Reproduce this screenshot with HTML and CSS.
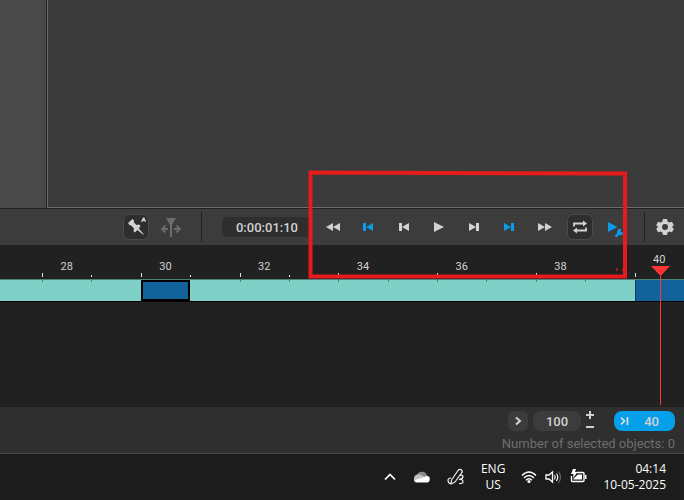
FILE: index.html
```html
<!DOCTYPE html>
<html lang="en">
<head>
<meta charset="utf-8">
<title>Timeline</title>
<link rel="stylesheet" href="styles.css">
</head>
<body>
<main class="workspace">
  <aside class="side-panel"></aside>
  <section class="viewer"></section>
</main>

<div class="toolbar">
  <button class="tool boxed pin" aria-label="Auto pin"><svg width="26" height="26" viewBox="0 0 26 26"><path d="M5 9 9.500 5 11 6.500 11 8.500 13.500 11 16 10.500 17.500 12 15.800 14.500 21 20.500 20 20.500 14.300 16 12 18.500 10.500 17 11 14.500 8.500 11.800 6.500 11Z" fill="#d2d2d2"/><path d="M18 8 20 3.500H21.500L23 8H21.700V7H19.500V8Z" fill="#d2d2d2"/></svg></button>
  <button class="tool split" aria-label="Split" disabled><svg width="26" height="26" viewBox="0 0 26 26"><path d="M8 4H18L14 11V23H12V11Z" fill="#6c6c6c"/><path d="M10 15H4.500M7.500 11.500 4 15 7.500 18.500M16 15H21.500M18.500 11.500 22 15 18.500 18.500" fill="none" stroke="#6c6c6c" stroke-width="1.800"/></svg></button>
  <span class="divider"></span>
  <input class="timecode" aria-label="Timecode" value="0:00:01:10">
  <div class="transport">
    <button class="tool" aria-label="Rewind"><svg width="26" height="26" viewBox="0 0 26 26"><path d="M6 13 13 9V17ZM13 13 20 9V17Z" fill="#d2d2d2"/></svg></button>
    <button class="tool" aria-label="First key"><svg width="26" height="26" viewBox="0 0 26 26"><path d="M8 9H11V17H8ZM11 13 18 9V17Z" fill="#0b9be8"/></svg></button>
    <button class="tool" aria-label="Previous frame"><svg width="26" height="26" viewBox="0 0 26 26"><path d="M8 9H11V17H8ZM11 13 18 9V17Z" fill="#d2d2d2"/></svg></button>
    <button class="tool" aria-label="Play"><svg width="26" height="26" viewBox="0 0 26 26"><path d="M8 8V18L18 13Z" fill="#d2d2d2"/></svg></button>
    <button class="tool" aria-label="Next frame"><svg width="26" height="26" viewBox="0 0 26 26"><path d="M8 9V17L15 13ZM15 9H18V17H15Z" fill="#d2d2d2"/></svg></button>
    <button class="tool" aria-label="Last key"><svg width="26" height="26" viewBox="0 0 26 26"><path d="M8 9V17L15 13ZM15 9H18V17H15Z" fill="#0b9be8"/></svg></button>
    <button class="tool" aria-label="Fast forward"><svg width="26" height="26" viewBox="0 0 26 26"><path d="M6 9V17L13 13ZM13 9V17L20 13Z" fill="#d2d2d2"/></svg></button>
    <button class="tool boxed" aria-label="Loop"><svg width="26" height="26" viewBox="0 0 26 26"><path d="M7 12.500V9.500H17M19 13.500V16.500H9" fill="none" stroke="#d2d2d2" stroke-width="1.800"/><path d="M16 6.500 20 9.500 16 12.500ZM10 13.500 6 16.500 10 19.500Z" fill="#d2d2d2"/></svg></button>
    <button class="tool" aria-label="Playback settings"><svg width="26" height="26" viewBox="0 0 26 26"><path d="M6 8V18L15.500 13Z" fill="#0b9be8"/><path d="M13.500 22.500 18.500 18" stroke="#0b9be8" stroke-width="2.400"/><path d="M19.500 15A3.200 3.200 0 1 0 21.500 18L19.500 18.500 18.500 17Z" fill="#0b9be8"/></svg></button>
  </div>
  <span class="divider end"></span>
  <button class="tool" aria-label="Settings"><svg width="26" height="26" viewBox="0 0 26 26"><path fill-rule="evenodd" fill="#d2d2d2" d="M11 5H15L15.600 7.600 17.300 8.600 20 7.800 21.800 11.200 19.900 13 21.800 14.800 20 18.200 17.300 17.400 15.600 18.400 15 21H11L10.400 18.400 8.700 17.400 6 18.200 4.200 14.800 6.100 13 4.200 11.200 6 7.800 8.700 8.600 10.400 7.600ZM13 10A3 3 0 1 0 13 16 3 3 0 1 0 13 10Z"/></svg></button>
</div>

<section class="timeline">
  <div class="ruler">
    <span></span>
    <span class="major">28</span><span class="minor"></span>
    <span class="major">30</span><span class="minor"></span>
    <span class="major">32</span><span class="minor"></span>
    <span class="major">34</span><span class="minor"></span>
    <span class="major">36</span><span class="minor"></span>
    <span class="major">38</span><span class="minor"></span>
    <span class="major current">40<i class="playhead"><svg width="19" height="10" viewBox="0 0 19 10"><path d="M0 0H19L9.500 10Z" fill="#ff3434"/></svg></i></span>
  </div>
  <div class="track">
    <span></span><span></span><span></span>
    <span class="key selected"></span>
    <span class="plain"></span><span></span><span></span><span></span><span></span><span></span><span></span><span></span><span></span>
    <span class="key"></span>
  </div>
</section>

<footer class="status">
  <div class="controls">
    <button class="step" aria-label="Next"><svg width="20" height="20" viewBox="0 0 20 20"><path d="M8 6.500 12 10 8 13.500" fill="none" stroke="#d2d2d2" stroke-width="2"/></svg></button>
    <input class="amount" aria-label="Zoom" value="100">
    <div class="stepper">
      <button aria-label="Increase"><svg width="8" height="8" viewBox="0 0 8 8"><path d="M0 4H8M4 0V8" stroke="#d2d2d2" stroke-width="2"/></svg></button>
      <button aria-label="Decrease"><svg width="8" height="8" viewBox="0 0 8 8"><path d="M0 4H8" stroke="#d2d2d2" stroke-width="2"/></svg></button>
    </div>
    <button class="end-frame"><svg width="9" height="10" viewBox="0 0 9 10"><path d="M1 1.500 4.500 5 1 8.500M7.500 1V9" fill="none" stroke="#e2e2e2" stroke-width="1.700"/></svg><span>40</span></button>
  </div>
  <p class="selection">Number of selected objects: 0</p>
</footer>

<div class="taskbar">
  <button aria-label="Hidden icons"><svg width="14" height="20" viewBox="0 0 14 20"><path d="M2 12.500 7 7.500 12 12.500" fill="none" stroke="#fff" stroke-width="1.700"/></svg></button>
  <button aria-label="Cloud storage"><svg width="18" height="20" viewBox="0 0 18 20"><path d="M4 8A5.300 5.300 0 0 1 14 8.500L11 12Z" fill="#8c8c8c"/><path d="M1 12A4 4 0 0 1 5 7.500Q7 7 9 8.500L13 11 9 14 1 13Z" fill="#c4c4c4"/><path d="M2 13 10 10.500 14 8.800A3.400 3.400 0 0 1 14 15.500H4A3 3 0 0 1 1 13Z" fill="#fff"/></svg></button>
  <button aria-label="Pen menu"><svg width="18" height="20" viewBox="0 0 18 20"><path d="M4.500 13 11 3.500Q13 1.500 14.500 3T14.500 6L8 15 4 17ZM4 11Q1 11 1 13.500T4 17M13 8.500Q16 7.500 16 10 15.500 12 12 12.500M12 12.500Q16 12 16 14.500T12 16.500" fill="none" stroke="#eee" stroke-width="1.200" stroke-linejoin="round"/></svg></button>
  <button class="language">ENG<br>US</button>
  <button class="system" aria-label="Network, volume and battery">
    <svg width="16" height="20" viewBox="0 0 16 20"><path d="M1 8.500Q8 1.500 15 8.500M3 11Q8 6 13 11M5 13.300Q8 10.300 11 13.300" fill="none" stroke="#fff" stroke-width="1.400"/><circle cx="8" cy="14.500" r="1.600" fill="#fff"/></svg>
    <svg width="17" height="20" viewBox="0 0 17 20"><path d="M1 8V12H4L7.500 15V5L4 8Z" fill="none" stroke="#fff" stroke-width="1.300"/><path d="M9.500 8Q11 10 9.500 12.500M11.500 6.500Q14 10 11.500 14" fill="none" stroke="#fff" stroke-width="1.200"/><path d="M13.500 4.500Q17.500 10 13.500 16" fill="none" stroke="#666" stroke-width="1.200"/></svg>
    <svg width="17" height="20" viewBox="0 0 17 20"><path d="M7 5.500H13Q14 5.500 14 6.500V13.500Q14 14.500 13 14.500H2.500Q1.500 14.500 1.500 13.500V9" fill="none" stroke="#fff" stroke-width="1.400"/><path d="M15 8H16.500V12H15Z" fill="#fff"/><path d="M8 7.500H12V12.500H3.500V11.500Z" fill="#fff"/><path d="M3 2H6L5 5H7.500L3 11 3.500 7H1Z" fill="#fff"/></svg>
  </button>
  <button class="clock">04:14<br>10-05-2025</button>
</div>

<svg class="callout" width="320" height="110" viewBox="0 0 320 110"><path d="M2.500 2.500 317 3.500V106.500H2.500Z" fill="none" stroke="#e61b1b" stroke-width="4"/><path d="M308 99.500H310M314 100H315" stroke="#c51c1c" stroke-width="2"/></svg>
</body>
</html>
```
FILE: styles.css
```css
* { box-sizing: border-box; }

body {
  margin: 0;
  min-height: 100vh;
  display: flex;
  flex-direction: column;
  position: relative;
  overflow-x: hidden;
  background: #212121;
  color: #d2d2d2;
  font-family: Roboto, "Liberation Sans", sans-serif;
}

button, input {
  margin: 0;
  padding: 0;
  border: 0;
  background: none;
  color: inherit;
  font: inherit;
}

svg { display: block; }

.workspace {
  flex: 1;
  display: flex;
  background: #3b3b3b;
  border-bottom: 1px solid #212121;
}

.side-panel {
  width: 47px;
  background: #494949;
  border-right: 1px solid #212121;
}

.viewer {
  flex: 1;
  border: solid #6c6c6c;
  border-width: 0 0 1px 1px;
}

.toolbar {
  height: 36px;
  padding: 0 6px 0 123px;
  display: flex;
  align-items: center;
  background: #3c3c3c;
}

.tool {
  width: 26px;
  height: 26px;
  flex: none;
}

.boxed {
  border-radius: 6px;
  background: #2e2e2e;
  box-shadow: inset 0 0 0 1px #4b4b4b;
}

.split { margin: 0 17px 0 9px; }

.divider {
  width: 1px;
  height: 30px;
  background: #212121;
}

.divider.end { margin: 0 7px 0 16px; }

.timecode {
  width: 90px;
  height: 20px;
  margin-left: 20px;
  margin-right: auto;
  border-radius: 5px;
  background: #2e2e2e;
  font-size: 13px;
  font-weight: 500;
  text-align: center;
}

.transport {
  width: 308px;
  display: flex;
  justify-content: space-between;
}

.timeline {
  height: 162px;
  overflow: hidden;
}

.ruler, .track {
  display: grid;
  grid-template-columns: 42px repeat(13, 1fr);
}

.ruler {
  height: 34px;
  font-size: 11px;
  line-height: 14px;
  text-align: center;
}

.ruler span { padding-top: 15px; }

.major, .minor {
  background: linear-gradient(#e0e0e0, #e0e0e0) no-repeat 0 28px / 1px 4px;
}

.minor { background-position: 0 30px; background-size: 1px 2px; }

.ruler .current { position: relative; padding-top: 8px; }

.playhead {
  position: absolute;
  z-index: 1;
  top: 21px;
  left: calc(50% - 8px);
  width: 19px;
  height: 139px;
}

.playhead::after {
  content: "";
  display: block;
  width: 1px;
  height: 129px;
  margin: 0 auto;
  background: #ff3434;
}

.track {
  height: 23px;
  border-top: 1px solid #4e827c;
  border-bottom: 1px solid #000;
  background: #7fd0c7;
}

.track span {
  background: linear-gradient(#4e827c, #4e827c) no-repeat 0 0 / 1px 2px;
}

.track span:first-child, .track .plain { background: none; }

.track .key {
  background: #12639b;
  border-left: 1px solid #0b3c5e;
}

.track .selected { border: 2px solid #000; }

.status {
  height: 47px;
  padding: 4px 9px 0;
  background: #2f2f2f;
  border-bottom: 1px solid #484848;
}

.controls {
  display: flex;
  justify-content: flex-end;
  font-size: 13px;
  font-weight: 500;
}

.step {
  width: 20px;
  height: 20px;
  margin-right: 5px;
  border-radius: 6px;
  background: #3c3c3c;
}

.amount {
  width: 48px;
  height: 20px;
  border-radius: 8px;
  background: #3c3c3c;
  text-align: center;
}

.stepper {
  display: grid;
  gap: 4px;
  margin: 0 20px 0 5px;
}

.stepper button { height: 8px; }

.end-frame {
  width: 61px;
  height: 20px;
  padding: 0 16px 0 6px;
  display: flex;
  align-items: center;
  justify-content: space-between;
  border-radius: 8px;
  background: #059fea;
}

.selection {
  margin: 4px 0 0;
  color: #6e6e6e;
  font-size: 13px;
  line-height: 18px;
  text-align: right;
}

.taskbar {
  height: 46px;
  padding: 0 18px;
  display: flex;
  align-items: center;
  justify-content: flex-end;
  gap: 16px;
  background: #1c1c1c;
  color: #fff;
  font-family: "Open Sans", "Noto Sans", sans-serif;
  font-size: 12px;
  line-height: 16px;
}

.language { text-align: center; }

.system { display: flex; gap: 8px; }

.clock { text-align: right; }

.callout {
  position: absolute;
  z-index: 2;
  top: 170px;
  left: 308px;
}
```
